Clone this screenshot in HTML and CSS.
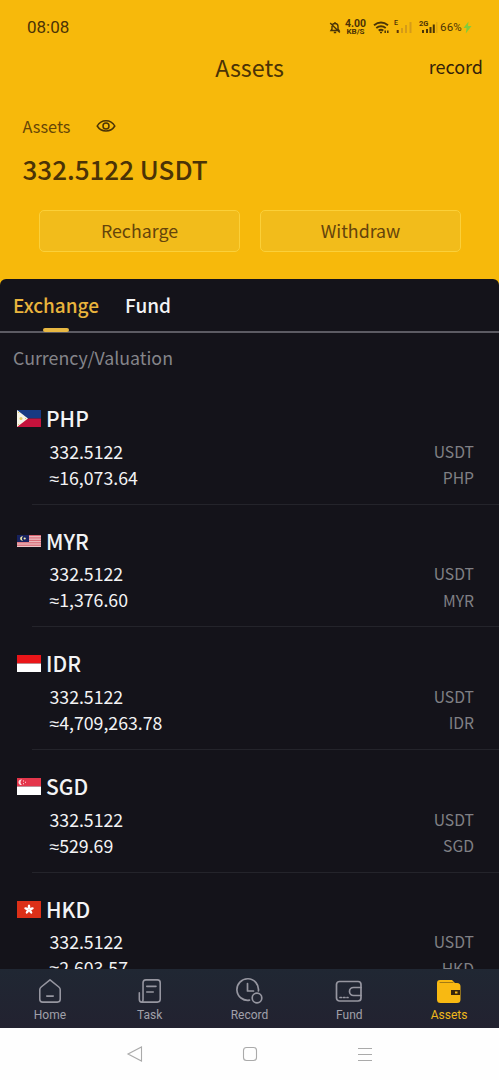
FILE: index.html
```html
<!DOCTYPE html>
<html lang="en">
<head>
<meta charset="utf-8">
<title>Assets</title>
<link rel="stylesheet" href="styles.css">
</head>
<body>
<div class="screen">
  <header class="hero">
    <div class="status">
      <span class="clock">08:08</span>
      <svg class="bell" width="12" height="13" viewBox="0 0 12 13" fill="none" stroke="#4a3508" stroke-width="1.4"><path d="M2 9.5h8L9 8V5.5a3 3 0 0 0-6 0V8zM4.8 11.5h2.4M6 1v1.5M1.2 2l9.6 9.5"/></svg>
      <span class="speed"><b>4.00</b><b class="unit">KB/S</b></span>
      <svg class="wifi" width="17" height="13" viewBox="0 0 17 13" fill="none" stroke="#4a3508" stroke-width="2"><path d="M1 4.2q7-5.2 14 0M3.3 7q4.7-3.4 9.4 0M5.7 9.6q2.3-1.6 4.6 0"/><path d="M7 11.5h2M12.2 12V9.5M14.8 9.5V12" stroke-width="1.5"/></svg>
      <span class="cell one"><b>E</b><svg width="19" height="14" viewBox="0 0 19 14"><path d="M2.7 10h2v3h-2z" fill="#5b3208"/><path d="M7 8h2v5H7zM11 5h2v8h-2zM15.5 2h2v11h-2z" fill="#d59b18"/></svg></span>
      <span class="cell two"><b>2G</b><svg width="19" height="14" viewBox="0 0 19 14"><path d="M3 10h2v3H3zM7 9h2v4H7zM10.5 7h2v6h-2zM13.8 4.5h2V13h-2z" fill="#4a3508"/><path d="M17 2h1.5v11H17z" fill="#e2a810"/></svg></span>
      <span class="battery">66%</span>
      <svg class="bolt" width="9" height="13" viewBox="0 0 9 13"><path d="M5.5.5.5 7h3l-.7 5.5L8.5 5H5z" fill="#83cc3d"/></svg>
    </div>
    <div class="titlebar"><h1>Assets</h1><span class="record">record</span></div>
    <div class="label">Assets
      <svg width="20" height="14" viewBox="0 0 20 14" fill="none" stroke="#4b3306" stroke-width="1.5"><path d="M1.2 7C5.2-.1 14.8-.1 18.8 7 14.8 13.6 5.2 13.6 1.2 7z"/><circle cx="10" cy="7" r="3"/></svg>
    </div>
    <div class="balance">332.5122 USDT</div>
    <div class="actions"><div class="button">Recharge</div><div class="button">Withdraw</div></div>
  </header>
  <main class="panel">
    <div class="tabs"><div class="tab active">Exchange</div><div class="tab">Fund</div></div>
    <div class="caption">Currency/Valuation</div>
    <section class="row">
      <div class="name"><svg class="flag" width="24" height="17" viewBox="0 0 24 17"><path fill="#173a83" d="M0 0h24v8.5H0z"/><path fill="#c5123c" d="M0 8.5h24V17H0z"/><path fill="#f6f4e8" d="M0 0l11 8.5L0 17z"/><circle cx="4" cy="8.5" r="1.5" fill="#e3ce67"/><path fill="#e3ce67" d="M1 2h1v1H1zM1 14h1v1H1zM8 8h1v1H8z"/></svg>PHP</div>
      <div class="line"><span>332.5122</span><em>USDT</em></div>
      <div class="line"><span class="approx">≈16,073.64</span><em>PHP</em></div>
    </section>
    <section class="row">
      <div class="name"><svg class="flag" width="24" height="12" viewBox="0 0 24 12"><path fill="#f3dede" d="M0 0h24v12H0z"/><path stroke="#d45361" stroke-width=".9" d="M0 .5h24M0 2.2h24M0 3.9h24M0 5.6h24M0 7.3h24M0 9h24M0 10.7h24"/><path fill="#17225f" d="M0 0h12v7H0z"/><path d="M6 1.4a2.2 2.2 0 1 0 0 4.2 2.5 2.5 0 0 1 0-4.2z" fill="#f2edb2"/><circle cx="7.7" cy="3.5" r="1.1" fill="#f2edb2"/></svg>MYR</div>
      <div class="line"><span>332.5122</span><em>USDT</em></div>
      <div class="line"><span class="approx">≈1,376.60</span><em>MYR</em></div>
    </section>
    <section class="row">
      <div class="name"><svg class="flag" width="24" height="17" viewBox="0 0 24 17"><path fill="#ea1519" d="M0 0h24v8.5H0z"/><path fill="#fff" d="M0 8.5h24V17H0z"/></svg>IDR</div>
      <div class="line"><span>332.5122</span><em>USDT</em></div>
      <div class="line"><span class="approx">≈4,709,263.78</span><em>IDR</em></div>
    </section>
    <section class="row">
      <div class="name"><svg class="flag" width="24" height="17" viewBox="0 0 24 17"><path fill="#e4364b" d="M0 0h24v8.5H0z"/><path fill="#fff" d="M0 8.5h24V17H0z"/><path fill="#ffe2e2" d="M5 1.5a2.8 2.8 0 1 0 0 5.4 3.2 3.2 0 0 1 0-5.4zM6 2.5h1v1H6zM8 3.7h1v1H8zM6 5.3h1v1H6z"/></svg>SGD</div>
      <div class="line"><span>332.5122</span><em>USDT</em></div>
      <div class="line"><span class="approx">≈529.69</span><em>SGD</em></div>
    </section>
    <section class="row">
      <div class="name"><svg class="flag" width="24" height="17" viewBox="0 0 24 17"><path fill="#dc3018" d="M0 0h24v17H0z"/><g fill="#fff"><ellipse id="petal" cx="12" cy="5.9" rx="1.3" ry="2.4"/><use href="#petal" transform="rotate(72 12 8.5)"/><use href="#petal" transform="rotate(144 12 8.5)"/><use href="#petal" transform="rotate(216 12 8.5)"/><use href="#petal" transform="rotate(288 12 8.5)"/></g></svg>HKD</div>
      <div class="line"><span>332.5122</span><em>USDT</em></div>
      <div class="line"><span class="approx">≈2,603.57</span><em>HKD</em></div>
    </section>
  </main>
  <nav class="nav">
    <div class="item"><svg width="26" height="28" viewBox="0 0 28 28"><path d="M4.5 9.7 14 2l9.5 7.7q1.5 1.2 1.5 3V23q0 3-3 3H6q-3 0-3-3V12.7q0-1.8 1.5-3zM10.5 19.5h7"/></svg>Home</div>
    <div class="item"><svg width="26" height="28" viewBox="0 0 28 28"><path d="M6.5 22V5q0-3 3-3H22q3 0 3 3v18q0 3-3 3H5q-2.5 0-2.5-3v-7M6.5 20v2.5Q6.5 26 5 26M10.5 9h10M10.5 15h7"/></svg>Task</div>
    <div class="item"><svg width="28" height="28" viewBox="0 0 28 28"><path d="M14.5 23.2A10.8 10.8 0 1 1 23.4 14M12.5 6.5V14h6"/><circle cx="22" cy="21" r="4.8"/></svg>Record</div>
    <div class="item"><svg width="28" height="28" viewBox="0 0 28 28"><rect x="1.5" y="4.5" width="24.5" height="19.5" rx="3"/><path d="M26 10.500h-7.5a4 4 0 0 0 0 8H26"/><path d="M5 20.5h8" stroke-dasharray="1.5 2"/></svg>Fund</div>
    <div class="item current"><svg width="28" height="28" viewBox="0 0 28 28"><path d="M5 3h12l3 3h2q3.5 0 3.5 3.5v13q0 3.5-3.5 3.5H5.5Q2 26 2 22.5V6q0-3 3-3z" class="solid"/><path d="M5 5.5h13" stroke="#8d6a16" stroke-width=".8"/><path class="pocket" d="M16 13h9v5h-9z"/><path class="solid" d="M20 14.5h2.5v2H20z"/></svg>Assets</div>
  </nav>
  <footer class="system">
    <svg width="18" height="18" viewBox="0 0 18 18"><path d="M15.5 2v14L2 9z"/></svg>
    <svg width="18" height="18" viewBox="0 0 18 18"><rect x="2.5" y="2.5" width="13" height="13" rx="3"/></svg>
    <svg width="18" height="18" viewBox="0 0 18 18"><path d="M2 3.5h14M2 9.5h14M2 15.5h14"/></svg>
  </footer>
</div>
</body>
</html>
```
FILE: styles.css
```css
* { box-sizing: border-box; }
body { margin: 0; font-family: "Noto Sans CJK SC", "Noto Sans", sans-serif; }
.screen { width: 499px; height: 1080px; display: flex; flex-direction: column; overflow: hidden; background: #f7b90b; }
.hero { height: 279px; flex: none; color: #4b3306; }
.status { height: 47px; padding: 7px 0 0 27px; display: flex; align-items: center; font-family: Roboto, sans-serif; }
.clock { font-size: 17px; width: 302px; }
.bell { margin-right: 4px; }
.speed { display: flex; flex-direction: column; align-items: center; width: 21px; font-size: 10.5px; line-height: 9px; }
.unit { font-size: 8px; line-height: 7px; }
.wifi { margin-left: 7px; }
.cell { display: grid; font-size: 7px; line-height: 7px; }
.cell > * { grid-area: 1 / 1; }
.one { margin-left: 4px; width: 19px; }
.one b { font-weight: 500; }
.two { margin-left: 6px; width: 21px; font-size: 7.5px; }
.battery { font-size: 11.5px; width: 23px; letter-spacing: .2px; }
.bolt { margin-left: 0; }
.titlebar { height: 42px; display: grid; grid-template-columns: 1fr auto 1fr; align-items: center; padding: 0 16px; }
h1 { grid-column: 2; margin: -2px 0 0; font-size: 23.3px; font-weight: 400; line-height: 42px; }
.record { justify-self: end; font-size: 18px; color: #35220a; margin-top: -4px; }
.label { margin: 24px 0 0 22.5px; height: 26px; display: flex; align-items: center; gap: 26px; font-size: 16.3px; color: #664507; }
.balance { margin: 10px 0 0 22.5px; height: 40px; line-height: 40px; font-size: 26px; font-weight: 500; }
.actions { display: flex; gap: 20px; padding: 21px 38px 0 39px; }
.button { flex: 1; height: 42px; line-height: 39px; text-align: center; font-size: 17.8px; border: 1px solid #fbd039; border-radius: 5px; background: #f2bc1b; color: #65440b; }
.panel { height: 690px; flex: none; overflow: hidden; background: #14131a; color: #f3f3f5; border-radius: 6px 6px 0 0; }
.tabs { height: 54px; display: flex; gap: 26px; padding-left: 13px; border-bottom: 2px solid #5c5b63; font-size: 19px; line-height: 52px; font-weight: 500; }
.active { color: #e9b43d; display: flex; flex-direction: column; align-items: center; }
.active::after { content: ""; width: 26px; height: 4px; flex: none; margin-top: -3px; border-radius: 2px; background: #e8b843; }
.caption { height: 49px; line-height: 49px; padding-left: 13px; font-size: 17.8px; color: #85858a; }
.row { height: 122.7px; padding: 22px 25px 0 16.5px; background: linear-gradient(#24242b, #24242b) 32px 100% / 100% 1px no-repeat; }
.name { height: 29px; display: flex; align-items: center; gap: 5.5px; font-size: 21px; line-height: 27px; font-weight: 500; }
.flag { flex: none; }
.line { display: flex; justify-content: space-between; align-items: center; height: 26.5px; line-height: 26.5px; padding-left: 33px; font-size: 17.7px; }
.name + .line { margin-top: 4.5px; }
.approx { display: block; }
.approx::first-letter { font-family: "Noto Sans", sans-serif; }
.line em { font-style: normal; font-size: 15.7px; color: #808085; padding-top: 2px; }
.nav { height: 59px; flex: none; display: grid; grid-template-columns: repeat(5, 1fr); background: linear-gradient(#202733, #222230); }
.item { display: flex; flex-direction: column; align-items: center; padding-top: 7.5px; color: #a0a0a9; font: 12px/20px Roboto, sans-serif; }
.item svg { fill: none; stroke: #9696a0; stroke-width: 1.7; stroke-linecap: round; stroke-linejoin: round; }
.item.current { color: #efb91b; }
.item svg .solid { fill: #f8b912; stroke: none; }
.item svg .pocket { fill: #39270c; stroke: none; }
.system { flex: 1; background: #fefefe; display: flex; justify-content: center; gap: 97px; padding-top: 17px; }
.system svg { fill: none; stroke: #aaa; stroke-width: 1.1; }
```
